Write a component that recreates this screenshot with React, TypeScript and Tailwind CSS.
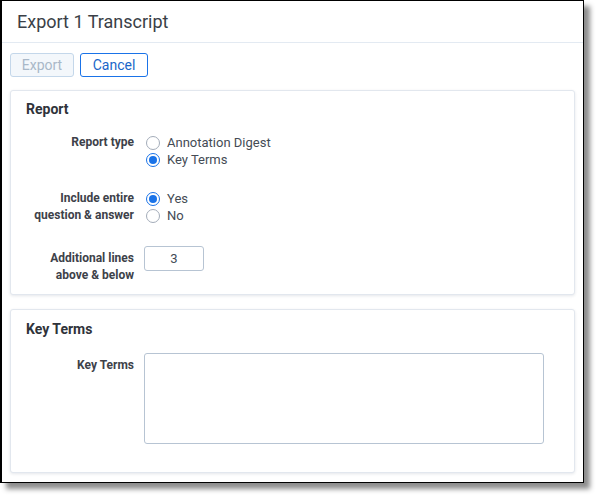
import React from 'react';

// Export dialog: header, action buttons, then two settings cards (report options, key terms).

const font = { fontFamily: 'Roboto, "Liberation Sans", sans-serif' };

function Radio({ label, checked }: { label: string; checked?: boolean }) {
  return (
    <label className="flex h-[17px] items-center gap-[7px] text-[13px] text-[#444b55]">
      {checked ? (
        <span className="flex h-[14px] w-[14px] items-center justify-center rounded-full border border-[#1a73e8] bg-white">
          <span className="h-[8px] w-[8px] rounded-full bg-[#1a73e8]" />
        </span>
      ) : (
        <span className="h-[14px] w-[14px] rounded-full border border-[#a3acb9] bg-white" />
      )}
      <span>{label}</span>
    </label>
  );
}

function Field({ label, children, className }: { label: React.ReactNode; children: React.ReactNode; className?: string }) {
  return (
    <div className={`flex items-start ${className ?? ''}`}>
      <div className="w-[118px] pr-[10px] text-right text-[12px] font-bold leading-[17px] text-[#3d4149]">{label}</div>
      {children}
    </div>
  );
}

function Card({ title, children, className }: { title: string; children: React.ReactNode; className?: string }) {
  return (
    <section
      className={`mx-[8px] rounded-[3px] border border-[#e2e7ee] bg-white px-[15px] shadow-[0_1px_3px_rgba(40,60,90,0.12)] ${className ?? ''}`}
    >
      <h2 className="text-[14px] font-bold text-[#2f333a]">{title}</h2>
      {children}
    </section>
  );
}

export default function App() {
  return (
    <div className="min-h-[497px] bg-white" style={font}>
      <div className="h-[483px] w-[584px] border border-l-2 border-black bg-white shadow-[6px_6px_5px_rgba(0,0,0,0.45)]">
        <header className="flex h-[42px] items-center border-b border-[#e3eaf2] pl-[15px]">
          <h1 className="text-[18px] text-[#3a3f47]">Export 1 Transcript</h1>
        </header>

        <div className="flex gap-[6px] px-[8px] pt-[10px]">
          <button className="h-[24px] w-[64px] rounded-[3px] border border-[#c4d7ea] bg-[#f3f7fb] text-[14px] text-[#a9b8c8]">
            Export
          </button>
          <button className="h-[24px] w-[68px] rounded-[3px] border border-[#1a73e8] bg-white text-[14px] text-[#1a66c9]">
            Cancel
          </button>
        </div>

        <Card title="Report" className="mt-[13px] h-[205px] pt-[8px]">
          <div className="mt-[14px] flex flex-col gap-[22px]">
            <Field label="Report type">
              <div className="ml-[2px] flex flex-col">
                <Radio label="Annotation Digest" />
                <Radio label="Key Terms" checked />
              </div>
            </Field>
            <Field
              label={
                <>
                  Include entire
                  <br />
                  question &amp; answer
                </>
              }
            >
              <div className="ml-[2px] flex flex-col">
                <Radio label="Yes" checked />
                <Radio label="No" />
              </div>
            </Field>
            <Field
              className="mt-[4px]"
              label={
                <>
                  Additional lines
                  <br />
                  above &amp; below
                </>
              }
            >
              <input
                defaultValue="3"
                className="-mt-[4px] h-[25px] w-[60px] rounded-[3px] border border-[#b7c4d3] text-center text-[13px] text-[#444b55] outline-none"
              />
            </Field>
          </div>
        </Card>

        <Card title="Key Terms" className="mt-[14px] h-[164px] pt-[9px]">
          <div className="mt-[17px]">
            <Field label="Key Terms">
              <textarea className="-mt-[4px] h-[91px] w-[400px] resize-none rounded-[3px] border border-[#b7c4d3] outline-none" />
            </Field>
          </div>
        </Card>
      </div>
    </div>
  );
}
